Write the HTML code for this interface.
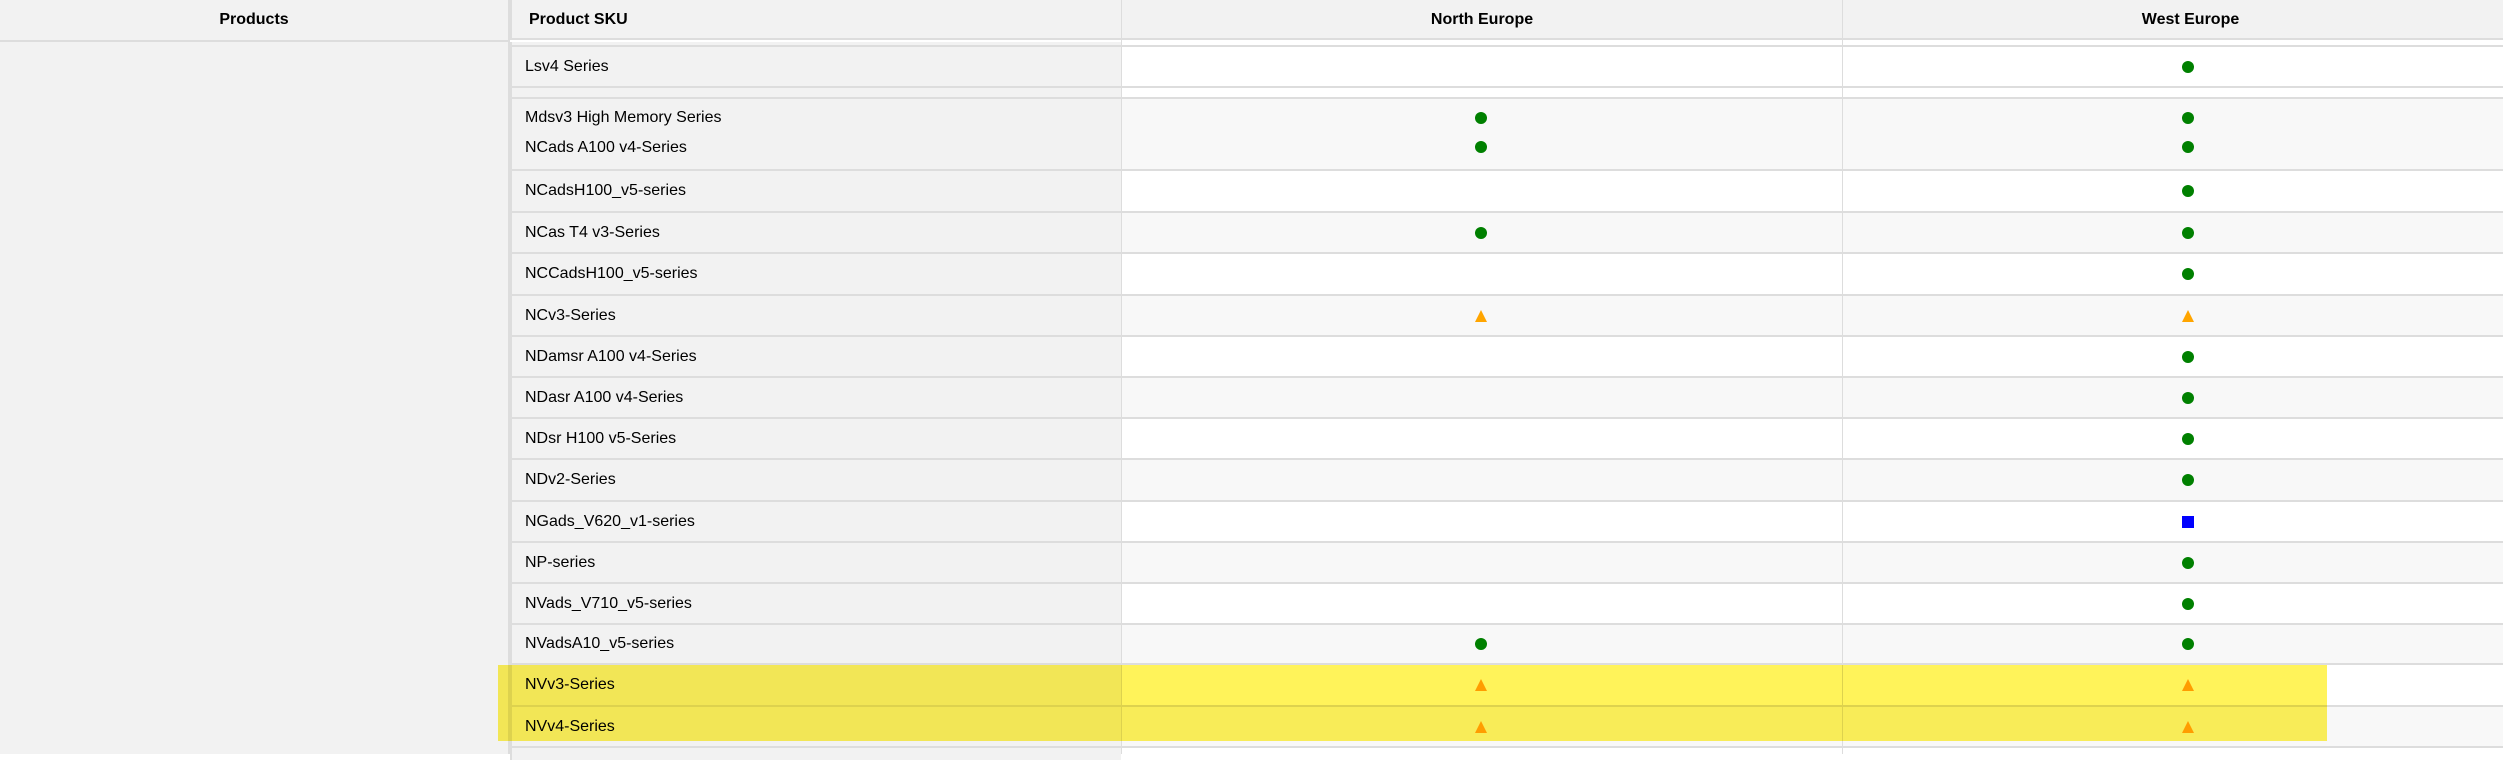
<!DOCTYPE html><html><head><style>
body{margin:0;width:2503px;height:754px;overflow:hidden;background:#fff;font-family:"Liberation Sans",Arial,sans-serif;font-size:16px;color:#000;position:relative}
.a{position:absolute}
.h{top:0;height:40px;background:#f2f2f2;font-weight:bold;line-height:40px;border-bottom:2px solid #ddd}
.r{position:absolute;left:510px;width:2000px}
.b{position:absolute;left:510px;width:2000px;height:2px;background:#ddd}
.sku{position:absolute;left:0;width:611px;height:100%;background:#f2f2f2;border-left:2px solid #ddd;box-sizing:border-box;padding-left:15px}
.t{position:absolute;left:15px}
.d{position:absolute;width:12px;height:12px;border-radius:50%;background:#008000}
.tr{position:absolute;width:0;height:0;border-left:6px solid transparent;border-right:6px solid transparent;border-bottom:12px solid #ffa500}
.sq{position:absolute;width:12px;height:12px;background:#0000ff}
.v{position:absolute;top:0;width:1px;height:754px;background:#ddd}
</style></head><body>
<div class="a" style="left:0;top:0;width:510px;height:754px;background:#f2f2f2;border-right:2px solid #ddd;box-sizing:border-box"></div>
<div class="a h" style="left:0;width:508px;text-align:center">Products</div>
<div class="a h" style="left:510px;width:611px;padding-left:17px;box-sizing:border-box;border-left:2px solid #ddd">Product SKU</div>
<div class="a h" style="left:1121px;width:721px;text-align:center;border-left:1px solid #ddd;box-sizing:border-box">North Europe</div>
<div class="a h" style="left:1842px;width:696px;text-align:center;border-left:1px solid #ddd;box-sizing:border-box">West Europe</div>
<div id="rows"></div>
<script>
var rows=[
[42,45,"",0,0,"#fff"],
[47,86,"Lsv4 Series",0,"d","#fff"],
[88,97,"",0,0,"#fff"],
[99,169,"",0,0,"#f8f8f8"],
[171,211,"NCadsH100_v5-series",0,"d","#fff"],
[213,252,"NCas T4 v3-Series","d","d","#f8f8f8"],
[254,294,"NCCadsH100_v5-series",0,"d","#fff"],
[296,335,"NCv3-Series","tr","tr","#f8f8f8"],
[337,376,"NDamsr A100 v4-Series",0,"d","#fff"],
[378,417,"NDasr A100 v4-Series",0,"d","#f8f8f8"],
[419,458,"NDsr H100 v5-Series",0,"d","#fff"],
[460,500,"NDv2-Series",0,"d","#f8f8f8"],
[502,541,"NGads_V620_v1-series",0,"sq","#fff"],
[543,582,"NP-series",0,"d","#f8f8f8"],
[584,623,"NVads_V710_v5-series",0,"d","#fff"],
[625,663,"NVadsA10_v5-series","d","d","#f8f8f8"],
[665,705,"NVv3-Series","tr","tr","#fff"],
[707,746,"NVv4-Series","tr","tr","#f8f8f8"],
[748,760,"",0,0,"#fff"]];
var h="";
rows.forEach(function(r){var top=r[0],ht=r[1]-r[0];
h+='<div class="r" style="top:'+top+'px;height:'+ht+'px;background:'+r[5]+'"><div class="sku"></div>';
if(r[2])h+='<div class="t" style="top:0;line-height:'+ht+'px">'+r[2]+'</div>';
[[r[3],971],[r[4],1678]].forEach(function(s){if(s[0])h+='<div class="'+s[0]+'" style="left:'+(s[1]-6)+'px;top:'+(ht/2-6)+'px"></div>';});
h+='</div>';
if(r[1]<754)h+='<div class="b" style="top:'+r[1]+'px"></div>';});
h+='<div class="t a" style="left:525px;top:108px;line-height:20px">Mdsv3 High Memory Series</div><div class="t a" style="left:525px;top:138px;line-height:20px">NCads A100 v4-Series</div>';
[[1481,112],[1481,141],[2188,112],[2188,141]].forEach(function(p){h+='<div class="d" style="left:'+(p[0]-6)+'px;top:'+p[1]+'px"></div>';});
h+='<div class="v" style="left:1121px"></div><div class="v" style="left:1842px"></div>';
h+='<div class="a" style="left:498px;top:665px;width:1829px;height:76px;background:#fff35a;mix-blend-mode:multiply"></div>';
document.getElementById("rows").innerHTML=h;
</script>
</body></html>
